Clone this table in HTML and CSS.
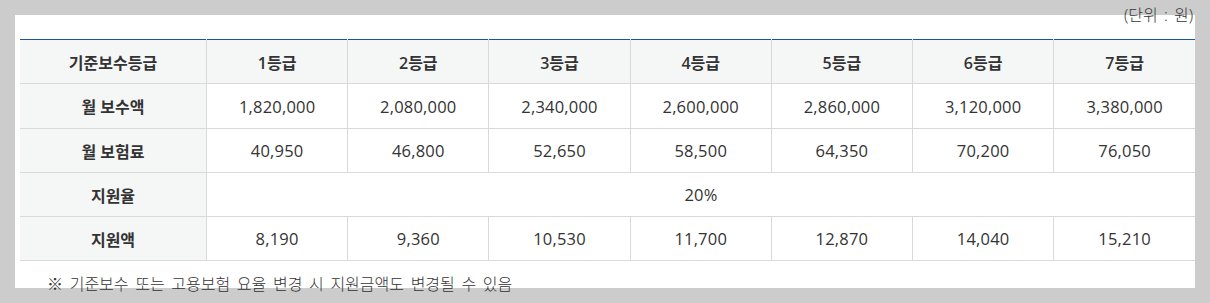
FILE: index.html
```html
<!DOCTYPE html>
<html lang="ko">
<head>
<meta charset="utf-8">
<link rel="stylesheet" href="styles.css">
</head>
<body>
<div class="panel">
  <div class="content">
    <p class="unit">(단위 : 원)</p>
    <table class="grade-table">
      <thead>
        <tr class="row-head">
          <th class="label">기준보수등급</th>
          <th>1등급</th><th>2등급</th><th>3등급</th><th>4등급</th><th>5등급</th><th>6등급</th><th>7등급</th>
        </tr>
      </thead>
      <tbody>
        <tr class="row-first">
          <th class="label">월 보수액</th>
          <td>1,820,000</td><td>2,080,000</td><td>2,340,000</td><td>2,600,000</td><td>2,860,000</td><td>3,120,000</td><td>3,380,000</td>
        </tr>
        <tr>
          <th class="label">월 보험료</th>
          <td>40,950</td><td>46,800</td><td>52,650</td><td>58,500</td><td>64,350</td><td>70,200</td><td>76,050</td>
        </tr>
        <tr>
          <th class="label">지원율</th>
          <td colspan="7">20%</td>
        </tr>
        <tr>
          <th class="label">지원액</th>
          <td>8,190</td><td>9,360</td><td>10,530</td><td>11,700</td><td>12,870</td><td>14,040</td><td>15,210</td>
        </tr>
      </tbody>
    </table>
    <p class="note">※ 기준보수 또는 고용보험 요율 변경 시 지원금액도 변경될 수 있음</p>
  </div>
</div>
</body>
</html>
```

FILE: styles.css
```css
html, body {
  margin: 0;
  padding: 0;
}
body {
  background: #cccccc;
  padding: 15px;
  font-family: "Open Sans", "Noto Sans CJK KR", sans-serif;
  color: #333333;
}
.panel {
  display: flow-root;
  background: #ffffff;
  width: 1180px;
  height: 273px;
}
.content {
  margin-top: -11px;
  padding-left: 5px;
}
.unit {
  margin: 0;
  height: 22px;
  line-height: 22px;
  font-size: 16px;
  word-spacing: 2px;
  text-align: right;
  padding-right: 2px;
  font-weight: 300;
}
.grade-table {
  margin-top: 13px;
  width: 1175px;
  border-collapse: collapse;
  table-layout: fixed;
  border-top: 1px solid #1b5596;
  font-size: 16px;
}
.grade-table th,
.grade-table td {
  border-bottom: 1px solid #d9d9d9;
  border-left: 1px solid #d9d9d9;
  text-align: center;
  padding: 0;
  height: 43px;
}
.grade-table th.label {
  width: 186px;
  border-left: none;
  font-weight: 600;
  background: #f5f7f7;
}
.grade-table thead th {
  background: #f5f7f7;
  font-weight: 600;
}
.grade-table td {
  font-weight: 400;
  font-size: 16.5px;
  letter-spacing: 0.2px;
}
.grade-table .row-first th,
.grade-table .row-first td {
  height: 44px;
}
.note {
  margin: 12px 0 0 27px;
  font-size: 16px;
  line-height: 22px;
  word-spacing: 2.5px;
  font-weight: 300;
}
```
